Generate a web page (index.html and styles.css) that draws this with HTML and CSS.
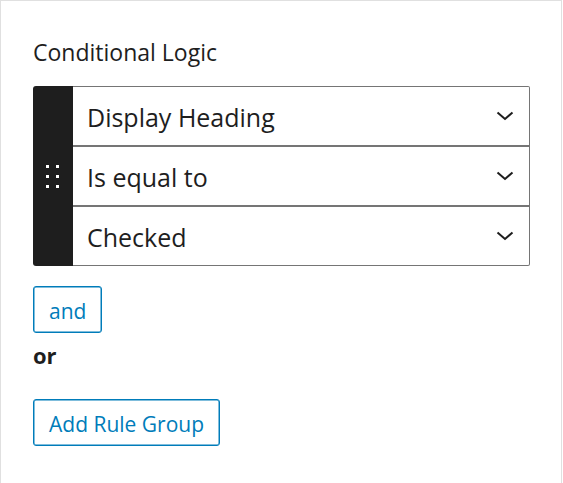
FILE: index.html
```html
<!DOCTYPE html>
<html>
<head>
<meta charset="utf-8">
<link rel="stylesheet" href="styles.css">
</head>
<body>
<div class="panel">
  <h2 class="title">Conditional Logic</h2>
  <div class="rule">
    <div class="handle">
      <svg width="13" height="23" viewBox="0 0 13 23"><g fill="#fff"><rect x="0" y="0" width="3" height="3"/><rect x="10" y="0" width="3" height="3"/><rect x="0" y="10" width="3" height="3"/><rect x="10" y="10" width="3" height="3"/><rect x="0" y="20" width="3" height="3"/><rect x="10" y="20" width="3" height="3"/></g></svg>
    </div>
    <div class="selects">
      <div class="select first"><span>Display Heading</span><svg class="chev" width="18" height="10" viewBox="0 0 18 10"><polyline points="1.5,1.5 9,8 16.5,1.5" fill="none" stroke="#1e1e1e" stroke-width="2"/></svg></div>
      <div class="select"><span>Is equal to</span><svg class="chev" width="18" height="10" viewBox="0 0 18 10"><polyline points="1.5,1.5 9,8 16.5,1.5" fill="none" stroke="#1e1e1e" stroke-width="2"/></svg></div>
      <div class="select last"><span>Checked</span><svg class="chev" width="18" height="10" viewBox="0 0 18 10"><polyline points="1.5,1.5 9,8 16.5,1.5" fill="none" stroke="#1e1e1e" stroke-width="2"/></svg></div>
    </div>
  </div>
  <button class="btn and">and</button>
  <div class="or">or</div>
  <button class="btn group">Add Rule Group</button>
</div>
</body>
</html>
```
FILE: styles.css
```css
html, body {
  margin: 0;
  padding: 0;
  background: #fff;
}
body {
  font-family: "Open Sans", "Noto Sans", sans-serif;
  color: #1e1e1e;
}
.panel {
  box-sizing: border-box;
  width: 562px;
  min-height: 483px;
  border: 1px solid #e0e0e0;
  border-bottom: none;
  padding: 35px 31px 0 32px;
}
.title {
  margin: 0 0 18px 0;
  font-size: 23px;
  font-weight: 400;
  line-height: 32px;
}
.rule {
  display: flex;
  height: 180px;
}
.handle {
  width: 40px;
  flex: none;
  background: #1e1e1e;
  border-radius: 3px 0 0 3px;
  display: flex;
  align-items: center;
  justify-content: center;
}
.handle svg {
  margin-right: 1px;
}
.selects {
  flex: 1;
  display: flex;
  flex-direction: column;
}
.select {
  box-sizing: border-box;
  height: 60px;
  border: 1px solid #757575;
  border-left: none;
  display: flex;
  align-items: center;
  justify-content: space-between;
  padding: 0 15px 0 14px;
  font-size: 25px;
  line-height: 34px;
}
.select span {
  padding-top: 1px;
}
.select.first {
  border-top-right-radius: 2px;
}
.select.last {
  border-bottom-right-radius: 2px;
}
.chev {
  display: block;
}
.btn {
  display: block;
  box-sizing: border-box;
  height: 47px;
  border: 1px solid #007cba;
  box-shadow: inset 0 0 0 0.5px #007cba;
  border-radius: 3px;
  background: #fff;
  color: #007cba;
  font-family: "Open Sans", "Noto Sans", sans-serif;
  font-size: 21px;
  padding: 2px 15px 0 15px;
  line-height: 28px;
}
.and {
  margin-top: 20px;
}
.or {
  margin-top: 7px;
  font-size: 22px;
  font-weight: 700;
  line-height: 30px;
}
.group {
  margin-top: 29px;
}
```
